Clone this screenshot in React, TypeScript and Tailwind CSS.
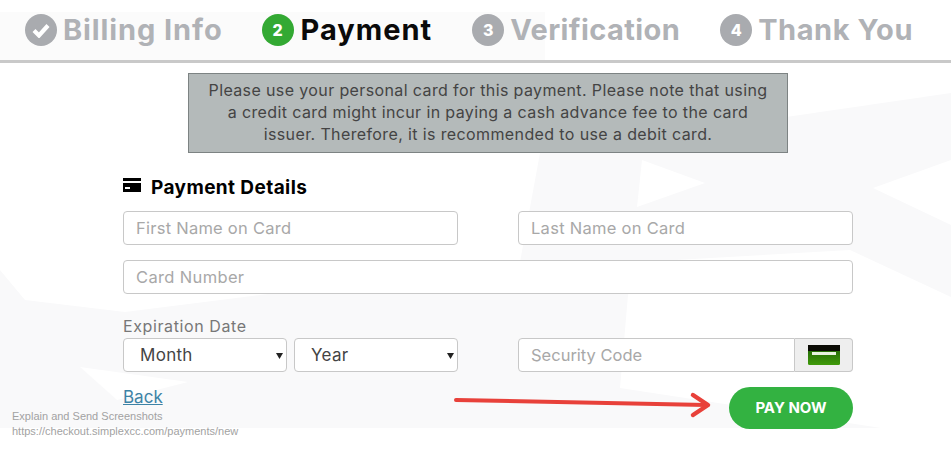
import React from "react";

const sans = "font-['Inter','Liberation_Sans',sans-serif]";

function Step({ icon, label, active, className, labelClass }: { icon: React.ReactNode; label: string; active?: boolean; className: string; labelClass: string }) {
  return (
    <div className={`flex items-center self-start ${className}`}>
      <div className={`w-8 h-8 rounded-full flex items-center justify-center shrink-0 text-white text-[16px] font-extrabold ${active ? "bg-[#33a933]" : "bg-[#a9abaf]"}`}>{icon}</div>
      <span className={`text-[29px] leading-8 font-bold whitespace-nowrap ${active ? "text-[#0a0a0a] ml-[7px]" : "text-[#b0b2b6] ml-[6px]"} ${labelClass}`}>{label}</span>
    </div>
  );
}

const field = "h-[34px] bg-white border border-[#c8c8c8] rounded-[4px] px-3 text-[16.5px] text-[#a8a8a8] flex items-center whitespace-nowrap";

function Select({ label, className }: { label: string; className: string }) {
  return (
    <div className={`h-[34px] w-[164px] bg-white border border-[#c8c8c8] rounded-[4px] flex items-center justify-between text-[17px] text-[#444] ${className}`}>
      <span className="mt-[2px] tracking-[0.3px]">{label}</span>
      <svg width="7" height="7" viewBox="0 0 7 7" className="mr-[3px]"><path d="M0 1h7L3.5 7z" fill="#222" /></svg>
    </div>
  );
}

export default function App() {
  return (
    <div className={`relative w-[951px] h-[449px] bg-white overflow-hidden ${sans}`}>
      <svg className="absolute inset-0" width="951" height="449" viewBox="0 0 951 449">
        <path d="M0 12H545V60H0z" fill="#fbfbfb" />
        <path d="M0 270L25 300L125 312L520 262L540 153L951 93V160L873 188L951 225V297L850 250L640 262L628 295L620 388L881 428H0z" fill="#f9f9fa" />
        <path d="M642 160L705 183L637 207z" fill="#ffffff" />
        <path d="M80 367L188 382L117 400z" fill="#ffffff" />
      </svg>

      <div className="relative">
        <header className="h-[63px] border-b-[3px] border-[#c9c9c9] flex pt-[14px]">
          <Step className="ml-[25px]" labelClass="tracking-[0.9px]" icon={
            <svg width="20" height="16" viewBox="0 0 20 16"><path d="M3 8.5l5 5 9-10" stroke="white" strokeWidth="4.2" fill="none" /></svg>
          } label="Billing Info" />
          <Step className="ml-[39px]" labelClass="tracking-[1px]" active icon="2" label="Payment" />
          <Step className="ml-[40px]" labelClass="tracking-[0.4px]" icon="3" label="Verification" />
          <Step className="ml-[40px]" labelClass="tracking-[0.55px]" icon="4" label="Thank You" />
        </header>

        <div className="mt-[10px] ml-[188px] w-[600px] h-[80px] bg-[#b4baba] border border-[#7d8383] flex items-center justify-center text-center text-[16px] leading-[22px] text-[#444] tracking-[0.38px] pb-[3px]">
          <p>Please use your personal card for this payment. Please note that using<br />a credit card might incur in paying a cash advance fee to the card<br />issuer. Therefore, it is recommended to use a debit card.</p>
        </div>

        <main className="ml-[123px] w-[730px]">
          <div className="flex items-center h-[22px] mt-[24px] text-black">
            <svg width="18" height="14" viewBox="0 0 18 14" fill="#000" className="mb-[7px]"><path d="M0 0h18V3H0zM0 5h18v9H0zm2 4v2h5V9z" fillRule="evenodd" /></svg>
            <h2 className="ml-[10px] text-[19px] font-bold tracking-[0.4px]">Payment Details</h2>
          </div>

          <div className="grid grid-cols-[335px_335px] gap-x-[60px] mt-[12px]">
            <div className={`${field} tracking-[0.25px]`}>First Name on Card</div>
            <div className={`${field} tracking-[0.28px]`}>Last Name on Card</div>
          </div>
          <div className={`${field} mt-[15px] tracking-[0.35px]`}>Card Number</div>

          <div className="text-[16px] leading-5 text-[#777] mt-[22px] tracking-[0.6px]">Expiration Date</div>
          <div className="flex mt-[2px]">
            <Select label="Month" className="pl-4" />
            <Select label="Year" className="pl-4 ml-[7px]" />
            <div className="ml-[60px] w-[335px] flex">
              <div className={`${field} flex-1 rounded-r-none`}>Security Code</div>
              <div className="w-[58px] h-[34px] bg-[#eeeeee] border border-l-0 border-[#c8c8c8] rounded-r-[4px] flex items-center justify-center">
                <svg width="32" height="20" viewBox="0 0 32 20">
                  <defs><linearGradient id="g" x1="0" y1="0" x2="0" y2="1"><stop offset="0" stopColor="#1d5b06" /><stop offset="1" stopColor="#3f9a0a" /></linearGradient></defs>
                  <rect width="32" height="20" rx="1.5" fill="url(#g)" />
                  <rect width="32" height="6" fill="#0a0a04" />
                  <rect x="4" y="7" width="24" height="3" fill="#e8f2e0" />
                </svg>
              </div>
            </div>
          </div>

          <div className="flex justify-between mt-[15px]">
            <a className="text-[17px] leading-5 text-[#3d83a6] underline">Back</a>
            <button className="w-[124px] h-[42px] rounded-full bg-[#33b241] text-white text-[15px] font-bold">PAY NOW</button>
          </div>
        </main>
      </div>

      <svg className="absolute left-[450px] top-[390px]" width="265" height="30" viewBox="0 0 265 30" fill="none" stroke="#e8413a" strokeLinecap="round" strokeLinejoin="round">
        <path d="M6 10L256 15" strokeWidth="4" />
        <path d="M243 5L258 15L243 25" strokeWidth="4.5" />
      </svg>

      <div className="absolute left-[12px] top-[409px] font-['Liberation_Sans',sans-serif] text-[11px] leading-[15px] text-[#a2a2a2]">
        <div>Explain and Send Screenshots</div>
        <div>https://checkout.simplexcc.com/payments/new</div>
      </div>
    </div>
  );
}
